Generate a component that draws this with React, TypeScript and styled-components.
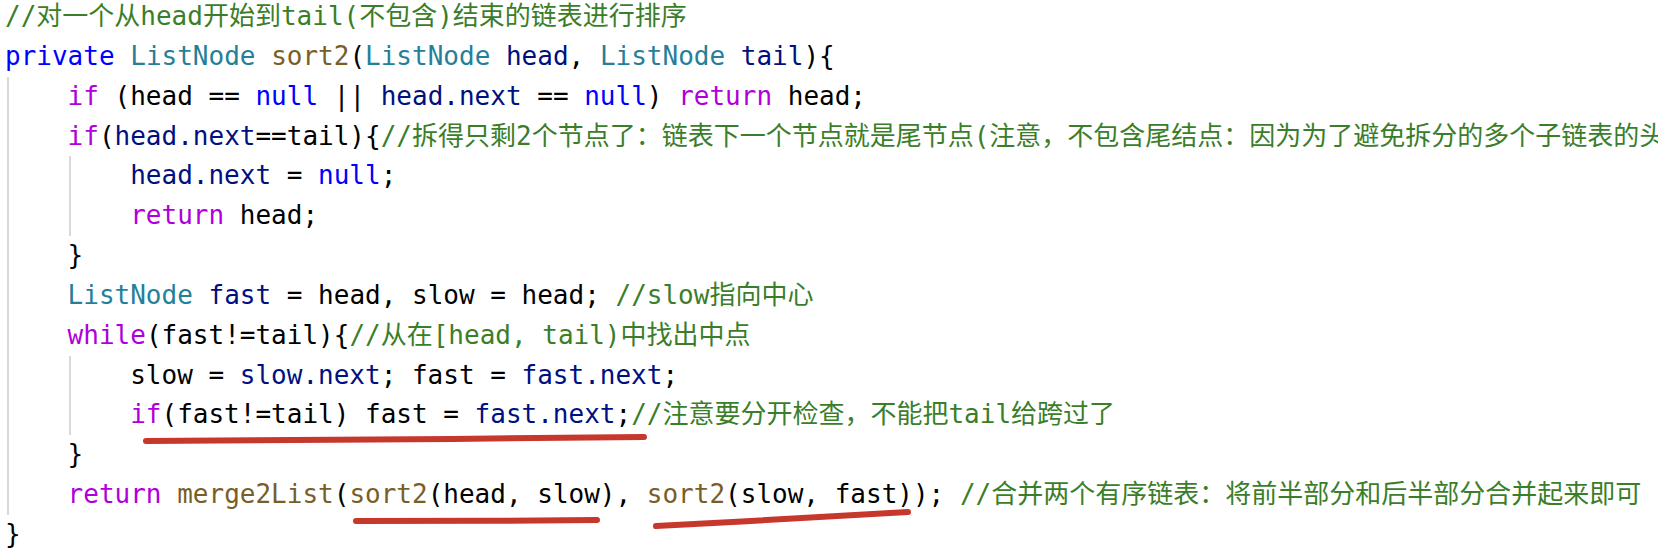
import React from "react";
import styled, { createGlobalStyle } from "styled-components";

const LINE_H = 39.85;

const Global = createGlobalStyle`
  html, body {
    margin: 0;
    padding: 0;
    background: #ffffff;
    overflow: hidden;
  }
  #root {
    width: 1658px;
    height: 552px;
    overflow: hidden;
  }
`;

const Editor = styled.div`
  position: relative;
  width: 1658px;
  height: 552px;
  overflow: hidden;
  background: #ffffff;
`;

const Code = styled.div`
  display: flex;
  flex-direction: column;
  margin-top: -3px;
  padding-left: 5px;
  font-family: "DejaVu Sans Mono", "Noto Sans CJK SC", monospace;
  font-size: 26px;
  color: #000000;
`;

const Line = styled.div`
  display: flex;
  align-items: stretch;
  height: ${LINE_H}px;
  white-space: pre;
`;

const Indent = styled.span`
  flex: 0 0 auto;
  width: 62.6px;
  background: linear-gradient(#d9d9d9, #d9d9d9) no-repeat 1.5px 0 / 2px 100%;
`;

const Text = styled.span`
  line-height: ${LINE_H}px;
`;

type Kind = "kw" | "ctl" | "type" | "fn" | "var" | "cmt" | "plain";

const colors: Record<Kind, string> = {
  kw: "#0000ff",
  ctl: "#af00db",
  type: "#267f99",
  fn: "#795e26",
  var: "#001080",
  cmt: "#3a7e2a",
  plain: "#000000",
};

const Tok = styled.span<{ $kind: Kind }>`
  color: ${(p) => colors[p.$kind]};
`;

const Marks = styled.svg`
  position: absolute;
  left: 0;
  top: 0;
  pointer-events: none;
`;

type Row = { indent: number; toks: [string, Kind][] };

const rows: Row[] = [
  { indent: 0, toks: [["//对一个从head开始到tail(不包含)结束的链表进行排序", "cmt"]] },
  {
    indent: 0,
    toks: [
      ["private", "kw"],
      [" ", "plain"],
      ["ListNode", "type"],
      [" ", "plain"],
      ["sort2", "fn"],
      ["(", "plain"],
      ["ListNode", "type"],
      [" ", "plain"],
      ["head", "var"],
      [", ", "plain"],
      ["ListNode", "type"],
      [" ", "plain"],
      ["tail", "var"],
      ["){", "plain"],
    ],
  },
  {
    indent: 1,
    toks: [
      ["if", "ctl"],
      [" (head == ", "plain"],
      ["null", "kw"],
      [" || ", "plain"],
      ["head.next", "var"],
      [" == ", "plain"],
      ["null", "kw"],
      [") ", "plain"],
      ["return", "ctl"],
      [" head;", "plain"],
    ],
  },
  {
    indent: 1,
    toks: [
      ["if", "ctl"],
      ["(", "plain"],
      ["head.next", "var"],
      ["==tail){", "plain"],
      [
        "//拆得只剩2个节点了：链表下一个节点就是尾节点(注意，不包含尾结点：因为为了避免拆分的多个子链表的头",
        "cmt",
      ],
    ],
  },
  {
    indent: 2,
    toks: [
      ["head.next", "var"],
      [" = ", "plain"],
      ["null", "kw"],
      [";", "plain"],
    ],
  },
  {
    indent: 2,
    toks: [
      ["return", "ctl"],
      [" head;", "plain"],
    ],
  },
  { indent: 1, toks: [["}", "plain"]] },
  {
    indent: 1,
    toks: [
      ["ListNode", "type"],
      [" ", "plain"],
      ["fast", "var"],
      [" = head, slow = head; ", "plain"],
      ["//slow指向中心", "cmt"],
    ],
  },
  {
    indent: 1,
    toks: [
      ["while", "ctl"],
      ["(fast!=tail){", "plain"],
      ["//从在[head, tail)中找出中点", "cmt"],
    ],
  },
  {
    indent: 2,
    toks: [
      ["slow = ", "plain"],
      ["slow.next", "var"],
      ["; fast = ", "plain"],
      ["fast.next", "var"],
      [";", "plain"],
    ],
  },
  {
    indent: 2,
    toks: [
      ["if", "ctl"],
      ["(fast!=tail) fast = ", "plain"],
      ["fast.next", "var"],
      [";", "plain"],
      ["//注意要分开检查，不能把tail给跨过了", "cmt"],
    ],
  },
  { indent: 1, toks: [["}", "plain"]] },
  {
    indent: 1,
    toks: [
      ["return", "ctl"],
      [" ", "plain"],
      ["merge2List", "fn"],
      ["(", "plain"],
      ["sort2", "fn"],
      ["(head, slow), ", "plain"],
      ["sort2", "fn"],
      ["(slow, fast)); ", "plain"],
      ["//合并两个有序链表：将前半部分和后半部分合并起来即可", "cmt"],
    ],
  },
  { indent: 0, toks: [["}", "plain"]] },
];

export default function App() {
  return (
    <>
      <Global />
      <Editor>
        <Code>
          {rows.map((r, i) => (
            <Line key={i}>
              {Array.from({ length: r.indent }).map((_, j) => (
                <Indent key={j} />
              ))}
              <Text>
                {r.toks.map(([t, k], j) => (
                  <Tok key={j} $kind={k}>
                    {t}
                  </Tok>
                ))}
              </Text>
            </Line>
          ))}
        </Code>
        <Marks width="1658" height="552" viewBox="0 0 1658 552">
          <g stroke="#c8372b" strokeWidth="6" strokeLinecap="round" fill="none">
            <path d="M146 441 C 300 440, 480 439, 644 437" />
            <path d="M356 521 C 430 521, 520 521, 597 520" />
            <path d="M656 526 C 740 522, 830 516, 908 512" />
          </g>
        </Marks>
      </Editor>
    </>
  );
}
